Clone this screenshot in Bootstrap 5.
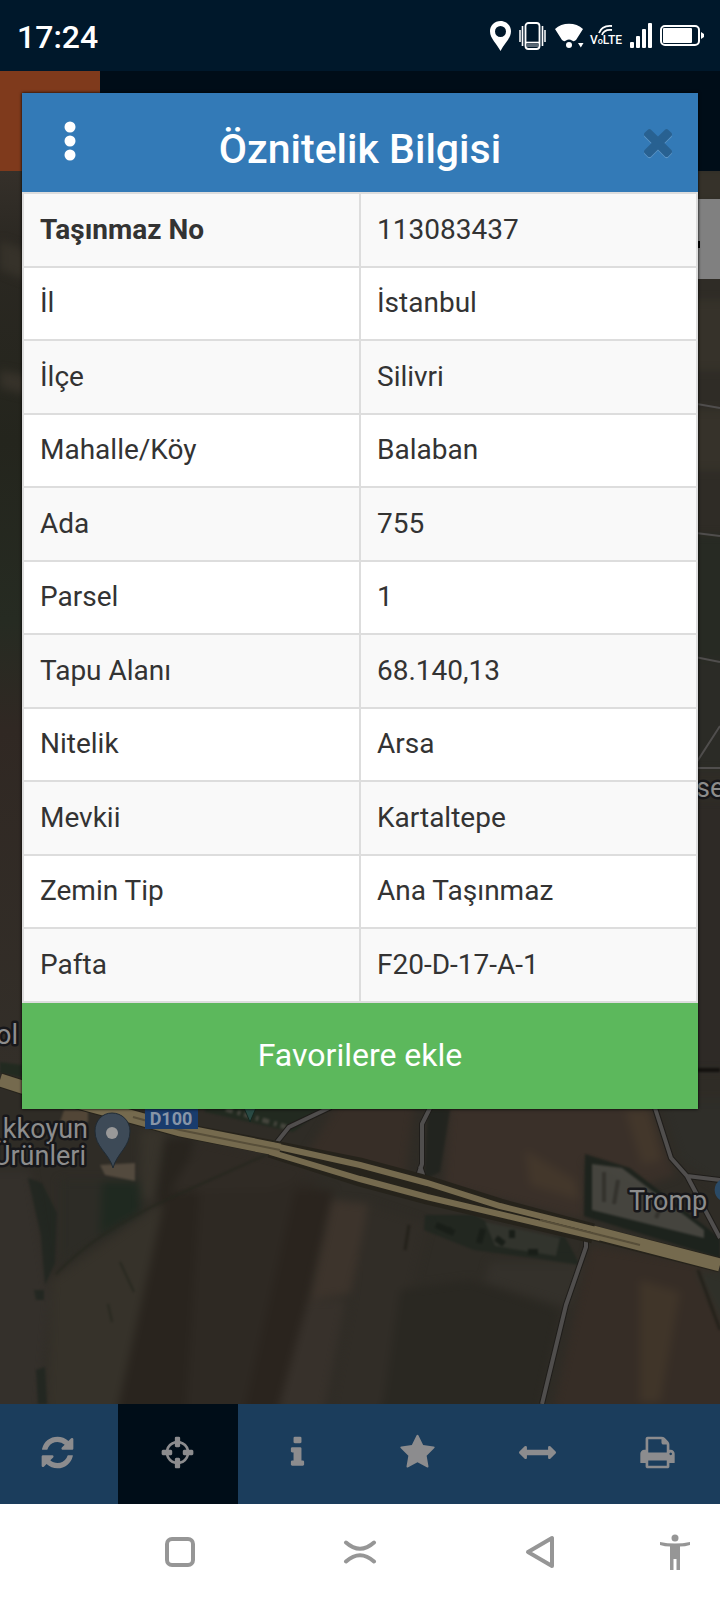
<!DOCTYPE html>
<html lang="tr">
<head>
<meta charset="utf-8">
<meta name="viewport" content="width=device-width, initial-scale=1">
<title>Öznitelik Bilgisi</title>
<link href="https://cdn.jsdelivr.net/npm/bootstrap@5.3.0/dist/css/bootstrap.min.css" rel="stylesheet">
<style>
  body { font-family: Roboto, "Noto Sans", sans-serif; color: #333; background: #2d2a22; }
  .status-bar { background: #00182b; height: 71px; color: #fff; padding: 0 16px 0 17px; }
  .clock { font-size: 32px; font-weight: 500; line-height: 40px; padding-top: 2px; }
  .app-bar { background: #000d18; height: 100px; }
  .menu-tile { background: #7f3a1c; width: 100px; border: 0; }
  .map-area { min-height: 600px; }
  .search-tab { top: 28px; width: 80px; height: 80px; background: #808080; padding: 42px 0 0 58px; }
  .search-tab i { display: block; width: 2px; height: 7px; background: #000; }
  .info-dialog { top: 93px; left: 22px; right: 22px; background: #fff; box-shadow: 0 0 3px #000; }
  .dialog-head { background: #337ab7; height: 99px; padding: 0 24px; }
  .dialog-head h1 { font-size: 41px; font-weight: 500; line-height: 48px; color: #fff; margin: 12px 0 0; }
  .icon-btn { border: 0; background: none; padding: 0; width: 50px; line-height: 0; }
  .icon-btn.times { opacity: .2; text-align: right; }
  .props { table-layout: fixed; border-collapse: collapse; font-size: 28px; line-height: 38px; }
  .props th, .props td { border: 2px solid #ddd; padding: 0 16px 1px; vertical-align: middle; font-weight: 400; }
  .props tr { height: 73px; background: #fff; }
  .props tr:nth-child(odd) { height: 74px; background: #f9f9f9; }
  .props tr:first-child th { font-weight: 700; }
  .fav-btn, .fav-btn:hover { background: #5cb85c; color: #fff; border: 0; border-radius: 0; font-size: 32px; line-height: 40px; padding: 32px 0 34px; }
  .tool-bar { background: #1b3d5c; height: 100px; padding-right: 2px; }
  .tool-bar button { border: 0; background: none; padding: 0 2px 3px 0; color: #8c8c8e; }
  .tool-bar button:first-child { margin-left: -2px; }
  .tool-bar button.active { background: #000d18; }
  .tool-bar svg { width: 37px; height: 37px; fill: currentColor; }
  .sys-nav { background: #fff; height: 96px; display: grid; grid-template-columns: 1fr 2fr 2fr 2fr 1fr; }
  .sys-nav button { border: 0; background: none; padding: 0; color: #969696; }
  .sys-nav button:first-child { grid-column: 2; }
  .lbl { font-size: 27px; fill: #8d8d8d; stroke: #17171a; stroke-width: 5px; paint-order: stroke; stroke-linejoin: round; }
</style>
</head>
<body>
<div class="d-flex flex-column min-vh-100 position-relative">

  <header class="status-bar d-flex align-items-center justify-content-between">
    <span class="clock">17:24</span>
    <span class="d-flex align-items-center gap-2">
      <svg width="21" height="30" viewBox="0 0 21 30"><path fill="#fff" fill-rule="evenodd" d="M10.500 0C4.600 0 0 4.500 0 10.300 0 17.500 7 23 10.500 30 14 23 21 17.500 21 10.300 21 4.500 16.400 0 10.500 0zM10.500 5a5.500 5.500 0 1 1 0 11 5.500 5.500 0 0 1 0-11z"/></svg>
      <svg width="27" height="28" viewBox="0 0 27 28" fill="none" stroke="#fff"><rect x="6.500" y="1" width="14" height="26" rx="3" stroke-width="1.800"/><path d="M7 20.500h13" stroke-width="1.600"/><path d="M8 22h11v3H8z" fill="#fff" stroke="none" opacity=".35"/><path d="M3.500 4v20M23.500 4v20" stroke-width="1.600"/><path d="M1 8v12M26 8v12" stroke-width="1.500"/></svg>
      <svg width="30" height="26" viewBox="0 0 30 26"><path fill="#fff" d="M1 6C8-1 22-1 29 6L22 17q-2 2-4 .5-3-2-6 0-2 1.500-4-.5z"/><circle cx="15" cy="22" r="3" fill="#fff"/><path fill="#fff" d="M24 20h5.500l-2.700 4.500z"/></svg>
      <svg width="30" height="24" viewBox="0 0 30 24" overflow="visible"><g fill="none" stroke="#fff" stroke-width="1.800"><path d="M7 9Q10 1 20 2"/><path d="M10 11Q12 5 20 6"/></g><text x="-2" y="20" font-size="12" font-weight="500" fill="#fff">V<tspan font-size="9">o</tspan>LTE</text></svg>
      <svg width="22" height="25" viewBox="0 0 22 25" fill="#fff"><rect y="19" width="4" height="6" rx="1"/><rect x="6" y="13" width="4" height="12" rx="1"/><rect x="12" y="6" width="4" height="19" rx="1"/><rect x="18" width="4" height="25" rx="1"/></svg>
      <svg width="44" height="21" viewBox="0 0 44 21"><rect x="1" y="1" width="38" height="19" rx="4" fill="none" stroke="#fff" stroke-width="2"/><rect x="3" y="3" width="29" height="15" rx="1" fill="#fff"/><path d="M41 7l3 2v3l-3 2z" fill="#fff"/></svg>
    </span>
  </header>

  <div class="app-bar d-flex"><button class="menu-tile" aria-label="Menü"></button></div>

  <main class="map-area position-relative flex-grow-1 overflow-hidden">
    <svg class="position-absolute top-0 start-0 w-100 h-100" viewBox="0 171 720 1233" preserveAspectRatio="xMidYMax slice" aria-hidden="true">
      <defs>
        <filter id="soft" x="-5%" y="-5%" width="110%" height="110%" color-interpolation-filters="sRGB"><feGaussianBlur stdDeviation="4"/></filter>
        <filter id="soft1" x="-5%" y="-5%" width="110%" height="110%" color-interpolation-filters="sRGB"><feGaussianBlur stdDeviation="1"/></filter>
        <linearGradient id="edge" x1="0" y1="0" x2="0" y2="1"><stop offset="0" stop-color="#35302a"/><stop offset=".08" stop-color="#2b2822"/><stop offset=".3" stop-color="#24251d"/><stop offset=".5" stop-color="#262b22"/><stop offset=".62" stop-color="#302823"/><stop offset="1" stop-color="#332f29"/></linearGradient>
      </defs>
      <rect y="171" width="720" height="1233" fill="#2f2c26"/>
      <rect y="171" width="40" height="900" fill="url(#edge)"/>
      <g filter="url(#soft)">
        <path fill="#36322a" d="M0 240l40 15v30L0 270zM0 370l40 8v20L0 388zM680 171h60v28h-60zM680 300h60v70h-60zM680 410h60v60h-60z"/>
        <path fill="#272a23" d="M680 535h60v125h-60z"/>
        <path fill="#2b2b26" d="M680 660h60v110h-60z"/>
        <path fill="#2e2a26" d="M680 800h60v270h-60z"/>
        <path fill="#34302b" d="M-20 1170h50l20 130-12 124h-58z"/>
        <path fill="#2d2c26" d="M60 1180h80v35l-80 50z"/>
        <path fill="#1f2920" d="M102 1182h38v30l-40 23z"/>
        <path fill="#36322a" d="M52 1280l114-80-50 224H46z"/>
        <path fill="#37332b" d="M140 1130h25l-12 74-12-10z"/>
        <path fill="#28241e" d="M165 1140l30-4-15 60-25 10z"/>
        <path fill="#29241e" d="M165 1198l45-13 90 0-60 239H114z"/>
        <path fill="#2e2923" d="M200 1185l120-5-30 60-40 184h-65z"/>
        <path fill="#2a241e" d="M295 1190l38 0-54 234h-38z"/>
        <path fill="#3d342c" d="M332 1200l38 4-20 90-40 6z"/>
        <path fill="#37312b" d="M308 1300h38l-24 124h-48z"/>
        <path fill="#312d27" d="M368 1204l60 20-50 200h-50z"/>
        <path fill="#302b25" d="M200 1140l130 30-60 20-100 2z"/>
        <path fill="#372e27" d="M340 1100h75l-10 78-100-20z"/>
        <path fill="#3a3029" d="M450 1105h200l25 70-30 10-60-25-1 60-140-34z"/>
        <path fill="#43372b" d="M625 1110h25l12 50-20 5zM525 1150l50 30 5 20-50-15z"/>
        <path fill="#2f2e29" d="M660 1100h80v100l-60-40z"/>
        <path fill="#34312b" d="M490 1262h95l-15 45-85-25z"/>
        <path fill="#2a2822" d="M400 1290l70-10 90 30-24 114H380z"/>
        <path fill="#362d26" d="M590 1245l120 20 30 30v129H550z"/>
        <path fill="#403529" d="M640 1280l40 12-20 110-20 0z"/>
        <path fill="#2f3029" d="M695 1270l45 5v80z"/>
      </g>
      <g filter="url(#soft1)" opacity=".8">
        <path fill="#1f2a1f" d="M0 1062l22 3v12L0 1073zM205 1108l120 0-32 24-88-20z"/>
        <path fill="#202620" d="M28 1178l14 5 15 30-2 50-10 22-4-50zM34 1290h10v10H36zM36 1370l9-3 2 37h-9z"/>
        <path fill="#20231e" d="M428 1110l22 0-10 62-16 8z"/>
        <path fill="#1f261f" d="M425 1215l50 0 30 18 60 4 15 28-40-6-66-9-50-20z"/>
        <path fill="#33362f" d="M485 1222l75 16-4 18-61-10z"/>
        <path fill="#19211b" d="M585 1154l45 14 90 70v20l-136-42z"/>
        <path fill="#4b4b45" d="M592 1164l30 4 82 62 0 8-112-28z"/>
        <path fill="#5d5245" d="M100 1165l35-2v18l-30-6z"/>
        <path fill="#5b4d3c" d="M64 1110h24v12H60z"/>
        <path d="M56 1274q40-42 110-74M166 1200l44-20 60-27M120 1262l14 30M112 1322l-4-18" fill="none" stroke="#25271e" stroke-width="2"/>
        <path d="M226 1109l60 18" fill="none" stroke="#4b4c43" stroke-width="5" stroke-dasharray="7 5 3 4"/>
        <path d="M436 1225l18 8M483 1229l-4 14M496 1238l8 6M512 1230v8M528 1252h10M445 1230h6" fill="none" stroke="#141b15" stroke-width="6"/>
        <path d="M409 1225l-4 25M698 1270l22 60" fill="none" stroke="#211f18" stroke-width="3"/>
        <path d="M680 1070h40" stroke="#0d0b09" stroke-width="4"/>
        <path d="M604 1172v30M618 1180l-4 24M640 1190v20M662 1204l-6 14" fill="none" stroke="#35342f" stroke-width="4"/>
      </g>
      <g fill="none" stroke="#1f1d1a" stroke-width="6" stroke-linejoin="round">
        <path id="lanes" d="M277 1142l12-15 42-20M430 1108l-8 16v40l-8 24M420 1166l8 24M655 1108l16 50 16 18 33 4M687 1176l33 62M586 1235v12l-20 58-24 99"/>
      </g>
      <g fill="none" stroke="#504e4d" stroke-linejoin="round">
        <path stroke-width="2" d="M680 401l40 7M680 531l40 5M680 654l40 8M680 788l40-62M684 768h36"/>
        <path stroke-width="4" d="M277 1142l12-15 42-20M430 1108l-8 16v40l-8 24M420 1166l8 24M655 1108l16 50 16 18 33 4M687 1176l33 62M586 1235v12l-20 58-24 99"/>
      </g>
      <path d="M0 1080L22 1087 70 1100 133 1117 180 1130 280 1149 360 1165 427 1183 500 1206 593 1231M270 1150L360 1179 427 1197 593 1236M593 1233L720 1265" fill="none" stroke="#26231b" stroke-width="15"/>
      <path d="M0 1080L22 1087 70 1100 133 1117 180 1130 280 1150M593 1232L720 1265" fill="none" stroke="#756a4e" stroke-width="13"/>
      <path d="M270 1145L360 1165 427 1183 500 1206 600 1231M270 1152L360 1179 427 1197 600 1238" fill="none" stroke="#756a4e" stroke-width="6"/>
      <path d="M133 1117L180 1130 280 1150M540 1220L640 1245" fill="none" stroke="#574e39" stroke-width="2"/>
      <path d="M112 1113c-10 0-17 8-17 18 0 16 14 22 18 37 4-15 17-21 17-37 0-10-8-18-18-18z" fill="#3d4a57" stroke="#202b34"/>
      <circle cx="112" cy="1133" r="6" fill="#999"/>
      <path d="M244 1108h12l-6 14z" fill="#294a44" stroke="#16261f"/>
      <rect x="145" y="1106" width="53" height="23" fill="#193c6d"/>
      <text x="171" y="1125" text-anchor="middle" font-size="18" font-weight="700" fill="#8795a7">D100</text>
      <g class="lbl">
        <text x="18" y="1044" text-anchor="end">ol</text>
        <text x="88" y="1138" text-anchor="end">kkoyun</text>
        <text x="86" y="1165" text-anchor="end">Ürünleri</text>
        <text x="629" y="1210">Tromp</text>
        <text x="696" y="797">se</text>
      </g>
      <path d="M720 1180a12 12 0 0 0 0 20z" fill="#2a4a66"/>
    </svg>
    <div class="search-tab position-absolute end-0"><i></i></div>
  </main>

  <nav class="tool-bar d-flex" aria-label="Harita araçları">
    <button class="flex-fill" aria-label="Yenile"><svg viewBox="0 0 1792 1792"><path transform="translate(128 128)" d="M1511 928q0 5-1 7-64 268-268 434.500t-478 166.500q-146 0-282.500-55t-243.500-157l-129 129q-19 19-45 19t-45-19-19-45v-448q0-26 19-45t45-19h448q26 0 45 19t19 45-19 45l-137 137q71 66 161 102t187 36q134 0 250-65t186-179q11-17 53-117 8-23 30-23h192q13 0 22.500 9.500t9.500 22.500zm25-800v448q0 26-19 45t-45 19h-448q-26 0-45-19t-19-45 19-45l138-138q-148-137-349-137-134 0-250 65t-186 179q-11 17-53 117-8 23-30 23h-199q-13 0-22.500-9.500t-9.500-22.500v-7q65-268 270-434.500t480-166.500q146 0 284 55.500t245 156.500l130-129q19-19 45-19t45 19 19 45z"/></svg></button>
    <button class="flex-fill active" aria-label="Konum"><svg viewBox="0 0 1792 1792"><path d="M1325 1024h-109q-26 0-45-19t-19-45v-128q0-26 19-45t45-19h109q-32-108-112.500-188.500t-188.500-112.500v109q0 26-19 45t-45 19h-128q-26 0-45-19t-19-45v-109q-108 32-188.500 112.500t-112.500 188.500h109q26 0 45 19t19 45v128q0 26-19 45t-45 19h-109q32 108 112.500 188.500t188.500 112.500v-109q0-26 19-45t45-19h128q26 0 45 19t19 45v109q108-32 188.500-112.500t112.500-188.500zm339-192v128q0 26-19 45t-45 19h-143q-37 161-154.500 278.500t-278.500 154.500v143q0 26-19 45t-45 19h-128q-26 0-45-19t-19-45v-143q-161-37-278.500-154.500t-154.500-278.500h-143q-26 0-45-19t-19-45v-128q0-26 19-45t45-19h143q37-161 154.500-278.500t278.500-154.500v-143q0-26 19-45t45-19h128q26 0 45 19t19 45v143q161 37 278.500 154.500t154.500 278.500h143q26 0 45 19t19 45z"/></svg></button>
    <button class="flex-fill" aria-label="Bilgi"><svg viewBox="0 0 1792 1792"><path d="M1216 1344v128q0 26-19 45t-45 19h-512q-26 0-45-19t-19-45v-128q0-26 19-45t45-19h64v-384h-64q-26 0-45-19t-19-45v-128q0-26 19-45t45-19h384q26 0 45 19t19 45v576h64q26 0 45 19t19 45zm-128-1152v192q0 26-19 45t-45 19h-256q-26 0-45-19t-19-45v-192q0-26 19-45t45-19h256q26 0 45 19t19 45z"/></svg></button>
    <button class="flex-fill" aria-label="Favoriler"><svg viewBox="0 0 1792 1792"><path d="M1728 647q0 22-26 48l-363 354 86 500q1 7 1 20 0 21-10.500 35.500t-30.500 14.500q-19 0-40-12l-449-236-449 236q-22 12-40 12-21 0-31.500-14.500t-10.500-35.500q0-6 2-20l86-500-364-354q-25-27-25-48 0-37 56-46l502-73 225-455q19-41 49-41t49 41l225 455 502 73q56 9 56 46z"/></svg></button>
    <button class="flex-fill" aria-label="Ölç"><svg viewBox="0 0 1792 1792"><path d="M1792 896q0 26-19 45l-256 256q-19 19-45 19t-45-19-19-45v-128h-1024v128q0 26-19 45t-45 19-45-19l-256-256q-19-19-19-45t19-45l256-256q19-19 45-19t45 19 19 45v128h1024v-128q0-26 19-45t45-19 45 19l256 256q19 19 19 45z"/></svg></button>
    <button class="flex-fill" aria-label="Yazdır"><svg viewBox="0 0 1792 1792"><path d="M448 1536h896v-256h-896v256zm0-640h896v-384h-160q-40 0-68-28t-28-68v-160h-640v640zm1152 64q0-26-19-45t-45-19-45 19-19 45 19 45 45 19 45-19 19-45zm128 0v416q0 13-9.500 22.500t-22.500 9.500h-224v160q0 40-28 68t-68 28h-960q-40 0-68-28t-28-68v-160h-224q-13 0-22.500-9.500t-9.500-22.500v-416q0-79 56.500-135.500t135.500-56.500h64v-544q0-40 28-68t68-28h672q40 0 88 20t76 48l152 152q28 28 48 76t20 88v256h64q79 0 135.500 56.500t56.500 135.500z"/></svg></button>
  </nav>

  <nav class="sys-nav" aria-label="Sistem">
    <button aria-label="Ana ekran"><svg width="30" height="30" viewBox="0 0 30 30"><rect x="2" y="2" width="26" height="26" rx="5" fill="none" stroke="currentColor" stroke-width="4"/></svg></button>
    <button aria-label="Son uygulamalar"><svg width="34" height="24" viewBox="0 0 34 24" fill="none" stroke="currentColor" stroke-width="4" stroke-linecap="round"><path d="M3 2.500Q17 15 31 2.500M3 21.500Q17 9 31 21.500"/></svg></button>
    <button aria-label="Geri"><svg width="30" height="34" viewBox="0 0 30 34"><path d="M3 17L27 3v28z" fill="none" stroke="currentColor" stroke-width="4" stroke-linejoin="round"/></svg></button>
    <button aria-label="Erişilebilirlik"><svg width="32" height="36" viewBox="0 0 32 36" fill="currentColor"><circle cx="16" cy="4" r="3.500"/><path d="M1 8q15 3 30 0v3q-5 1.500-10 1.500V36h-3.500V25h-3v11H11V12.500Q6 12.500 1 11z"/></svg></button>
  </nav>

  <section class="info-dialog position-absolute" role="dialog" aria-labelledby="dlgTitle">
    <div class="dialog-head d-flex align-items-center justify-content-between">
      <button class="icon-btn" aria-label="Seçenekler"><svg width="50" height="44" viewBox="0 0 50 44" fill="#fff"><circle cx="24" cy="6" r="5.500"/><circle cx="24" cy="20" r="5.500"/><circle cx="24" cy="34" r="5.500"/></svg></button>
      <h1 id="dlgTitle">Öznitelik Bilgisi</h1>
      <button class="icon-btn times" aria-label="Kapat"><svg width="32" height="34" viewBox="220 240 1352 1436"><path fill="#fff" d="M1490 1367q0 40-28 68l-136 136q-28 28-68 28t-68-28l-294-294-294 294q-28 28-68 28t-68-28l-136-136q-28-28-28-68t28-68l294-294-294-294q-28-28-28-68t28-68l136-136q28-28 68-28t68 28l294 294 294-294q28-28 68-28t68 28l136 136q28 28 28 68t-28 68l-294 294 294 294q28 28 28 68z"/><path fill="#000" d="M1490 1322q0 40-28 68l-136 136q-28 28-68 28t-68-28l-294-294-294 294q-28 28-68 28t-68-28l-136-136q-28-28-28-68t28-68l294-294-294-294q-28-28-28-68t28-68l136-136q28-28 68-28t68 28l294 294 294-294q28-28 68-28t68 28l136 136q28 28 28 68t-28 68l-294 294 294 294q28 28 28 68z"/></svg></button>
    </div>
    <table class="props w-100">
      <tbody>
        <tr><th scope="row">Taşınmaz No</th><td>113083437</td></tr>
        <tr><th scope="row">İl</th><td>İstanbul</td></tr>
        <tr><th scope="row">İlçe</th><td>Silivri</td></tr>
        <tr><th scope="row">Mahalle/Köy</th><td>Balaban</td></tr>
        <tr><th scope="row">Ada</th><td>755</td></tr>
        <tr><th scope="row">Parsel</th><td>1</td></tr>
        <tr><th scope="row">Tapu Alanı</th><td>68.140,13</td></tr>
        <tr><th scope="row">Nitelik</th><td>Arsa</td></tr>
        <tr><th scope="row">Mevkii</th><td>Kartaltepe</td></tr>
        <tr><th scope="row">Zemin Tip</th><td>Ana Taşınmaz</td></tr>
        <tr><th scope="row">Pafta</th><td>F20-D-17-A-1</td></tr>
      </tbody>
    </table>
    <button class="fav-btn btn w-100 d-block">Favorilere ekle</button>
  </section>
</div>
<script src="https://cdn.jsdelivr.net/npm/bootstrap@5.3.0/dist/js/bootstrap.bundle.min.js"></script>
</body>
</html>
